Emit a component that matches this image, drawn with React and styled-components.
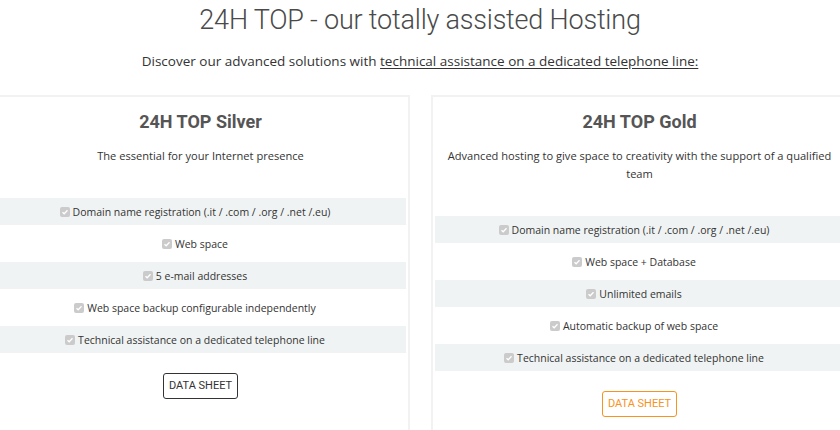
import styled, { createGlobalStyle } from "styled-components";

const GlobalStyle = createGlobalStyle`
  html, body {
    margin: 0;
    padding: 0;
    background: #fff;
    overflow: hidden;
  }
  body {
    font-family: "Open Sans", "Liberation Sans", sans-serif;
    color: #333;
  }
`;

const plans = [
  {
    name: "24H TOP Silver",
    text: "The essential for your Internet presence",
    features: [
      "Domain name registration (.it / .com / .org / .net /.eu)",
      "Web space",
      "5 e-mail addresses",
      "Web space backup configurable independently",
      "Technical assistance on a dedicated telephone line",
    ],
    tone: "dark",
  },
  {
    name: "24H TOP Gold",
    text: "Advanced hosting to give space to creativity with the support of a qualified team",
    features: [
      "Domain name registration (.it / .com / .org / .net /.eu)",
      "Web space + Database",
      "Unlimited emails",
      "Automatic backup of web space",
      "Technical assistance on a dedicated telephone line",
    ],
    tone: "orange",
  },
];

const Page = styled.main`
  width: 100%;
  height: 430px;
  overflow: hidden;
`;

const Heading = styled.h1`
  margin: 0;
  padding-top: 3px;
  font-family: Roboto, "Liberation Sans", sans-serif;
  font-weight: 300;
  font-size: 27px;
  letter-spacing: -0.2px;
  line-height: 34px;
  color: #4a4a4a;
  text-align: center;
`;

const Lead = styled.p`
  margin: 15px 0 0;
  font-size: 13.5px;
  line-height: 18px;
  color: #333;
  text-align: center;
  u {
    text-decoration: underline;
    text-underline-offset: 2px;
  }
`;

const Cards = styled.section`
  display: flex;
  justify-content: center;
  gap: 21px;
  margin-top: 25px;
`;

const Card = styled.article`
  flex: 0 0 418px;
  box-sizing: border-box;
  border: 2px solid #f2f2f2;
  padding: 15px 2px 40px;
  text-align: center;
`;

const PlanName = styled.h2`
  margin: 0;
  font-family: Roboto, "Liberation Sans", sans-serif;
  font-weight: 700;
  font-size: 18px;
  line-height: 20px;
  color: #555;
`;

const PlanText = styled.p`
  margin: 15px 0 0;
  padding: 0 8px;
  font-size: 11.1px;
  line-height: 18px;
  color: #333;
`;

const Features = styled.ul`
  list-style: none;
  margin: 33px 0 0;
  padding: 0;
  display: flex;
  flex-direction: column;
  gap: 5px;
`;

const Feature = styled.li`
  display: flex;
  align-items: center;
  justify-content: center;
  gap: 3px;
  height: 27px;
  padding-right: 11px;
  font-size: 10.5px;
  color: #333;
  background: ${(p) => (p.$striped ? "#f0f3f4" : "transparent")};
`;

const Check = styled.span`
  display: inline-flex;
  align-items: center;
  justify-content: center;
  width: 10px;
  height: 10px;
  border-radius: 2px;
  background: #cbcbcb;
  flex: 0 0 auto;
`;

const SheetButton = styled.button`
  margin-top: 20px;
  padding: 4px 5px;
  font-family: Roboto, "Liberation Sans", sans-serif;
  font-size: 11px;
  line-height: 16px;
  background: #fff;
  border-radius: 3px;
  cursor: pointer;
  color: ${(p) => (p.$tone === "orange" ? "#f7931e" : "#333")};
  border: 1px solid ${(p) => (p.$tone === "orange" ? "#f7931e" : "#333")};
`;

const CheckIcon = () => (
  <Check>
    <svg width="8" height="8" viewBox="0 0 8 8">
      <path d="M1.5 4.2 L3.2 5.8 L6.5 2.3" fill="none" stroke="#fff" strokeWidth="1.3" />
    </svg>
  </Check>
);

export default function App() {
  return (
    <Page>
      <GlobalStyle />
      <Heading>24H TOP - our totally assisted Hosting</Heading>
      <Lead>
        Discover our advanced solutions with <u>technical assistance on a dedicated telephone line:</u>
      </Lead>
      <Cards>
        {plans.map((plan) => (
          <Card key={plan.name}>
            <PlanName>{plan.name}</PlanName>
            <PlanText>{plan.text}</PlanText>
            <Features>
              {plan.features.map((f, i) => (
                <Feature key={f} $striped={i % 2 === 0}>
                  <CheckIcon />
                  {f}
                </Feature>
              ))}
            </Features>
            <SheetButton $tone={plan.tone}>DATA SHEET</SheetButton>
          </Card>
        ))}
      </Cards>
    </Page>
  );
}
